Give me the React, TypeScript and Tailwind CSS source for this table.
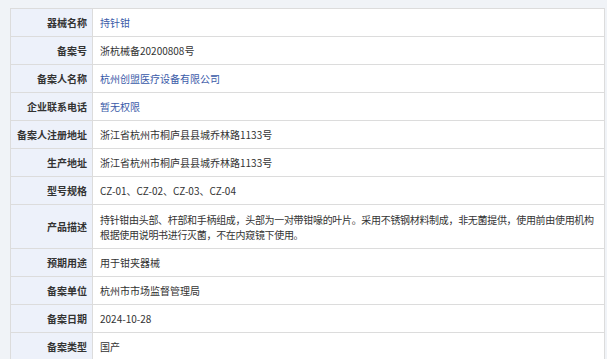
import React from "react";

type Row = { label: string; value: string[]; link?: boolean; tall?: boolean };

const rows: Row[] = [
  { label: "器械名称", value: ["持针钳"], link: true },
  { label: "备案号", value: ["浙杭械备20200808号"] },
  { label: "备案人名称", value: ["杭州创盟医疗设备有限公司"], link: true },
  { label: "企业联系电话", value: ["暂无权限"], link: true },
  { label: "备案人注册地址", value: ["浙江省杭州市桐庐县县城乔林路1133号"] },
  { label: "生产地址", value: ["浙江省杭州市桐庐县县城乔林路1133号"] },
  { label: "型号规格", value: ["CZ-01、CZ-02、CZ-03、CZ-04"] },
  {
    label: "产品描述",
    value: [
      "持针钳由头部、杆部和手柄组成，头部为一对带钳喙的叶片。采用不锈钢材料制成，非无菌提供，使用前由使用机构",
      "根据使用说明书进行灭菌，不在内窥镜下使用。",
    ],
    tall: true,
  },
  { label: "预期用途", value: ["用于钳夹器械"] },
  { label: "备案单位", value: ["杭州市市场监督管理局"] },
  { label: "备案日期", value: ["2024-10-28"] },
  { label: "备案类型", value: ["国产"] },
];

const App = () => {
  return (
    <div
      className="min-h-screen bg-[#f0f3f7] pl-[10px] pr-[2px] pt-[8px] text-[10px] text-[#333]"
      style={{ fontFamily: '"Microsoft YaHei", "Noto Sans CJK SC", sans-serif' }}
    >
      <div className="border border-b-0 border-[#dcdcdc] bg-white">
        {rows.map((r) => (
          <div
            key={r.label}
            className={`flex border-b border-[#dcdcdc] ${r.tall ? "h-[44px]" : "h-[28px]"}`}
          >
            <div className="w-[82px] shrink-0 flex items-center justify-end pr-[5px] bg-[#edf1fa] border-r border-[#dcdcdc] font-bold text-[#333] whitespace-nowrap">
              {r.label}
            </div>
            <div
              className={`flex-1 min-w-0 flex flex-col justify-center pl-[7px] leading-[15px] whitespace-nowrap ${
                r.tall ? "tracking-[-0.32px]" : ""
              } ${r.link ? "text-[#3a5aa8]" : "text-[#333]"}`}
            >
              {r.value.map((line) => (
                <span key={line}>{line}</span>
              ))}
            </div>
          </div>
        ))}
      </div>
    </div>
  );
};

export default App;
